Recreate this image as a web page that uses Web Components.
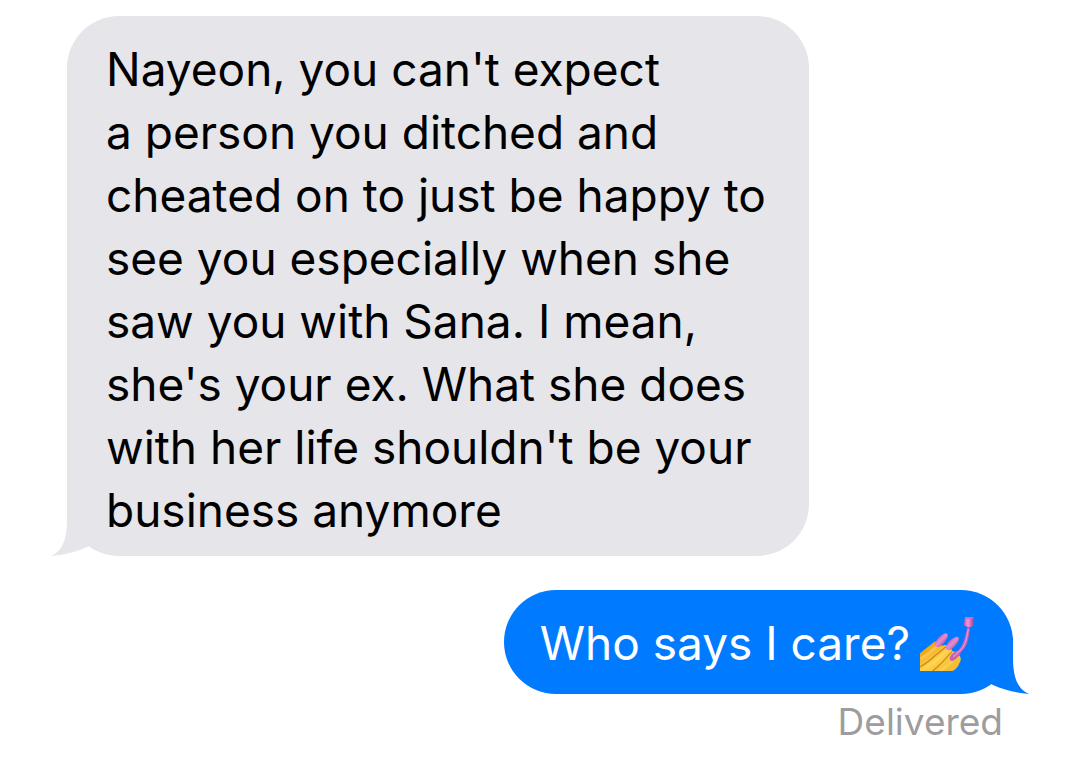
<!DOCTYPE html>
<html lang="en">
<head>
<meta charset="utf-8">
<meta name="viewport" content="width=device-width, initial-scale=1">
<title>Messages</title>
<style>
body { margin: 0; background: #fff; font-family: Inter, "Liberation Sans", sans-serif; }
</style>
</head>
<body>
<message-thread>
  <message-bubble side="received">Nayeon, you can't expect<br>a person you ditched and<br>cheated on to just be happy to<br>see you especially when she<br>saw you with Sana. I mean,<br>she's your ex. What she does<br>with her life shouldn't be your<br>business anymore</message-bubble>
  <message-bubble side="sent">Who says I care? <nail-emoji></nail-emoji></message-bubble>
  <delivery-status>Delivered</delivery-status>
</message-thread>
<script>
const attach = (host, markup) => {
  host.attachShadow({ mode: "open" }).innerHTML = markup;
};

customElements.define("message-thread", class extends HTMLElement {
  constructor() {
    super();
    attach(this, `
      <style>
        :host { display: block; }
        main { display: flex; flex-direction: column; padding: 16px 67px; }
      </style>
      <main><slot></slot></main>`);
  }
});

customElements.define("message-bubble", class extends HTMLElement {
  constructor() {
    super();
    attach(this, `
      <style>
        :host {
          display: block; position: relative; box-sizing: border-box;
          padding: 22px 39px 14px; border-radius: 52px;
          font-size: 46px; line-height: 63px;
        }
        :host([side="received"]) {
          align-self: flex-start; width: 100%; max-width: 742px;
          background: #e5e5ea; color: #000;
        }
        :host([side="sent"]) {
          align-self: flex-end; margin-top: 34px; padding: 22px 39px 19px 36px;
          background: #007aff; color: #fff;
        }
        .tail { position: absolute; bottom: 0; width: 48px; height: 56px; fill: #e5e5ea; left: -16px; }
        :host([side="sent"]) .tail { left: auto; right: -16px; fill: #007aff; transform: scaleX(-1); }
        p { position: relative; margin: 0; }
        :host([side="sent"]) p { display: flex; align-items: center; gap: 10px; }
      </style>
      <svg class="tail" viewBox="0 0 48 56" aria-hidden="true">
        <path d="M16 0V20C16 38 12 51 0 56C12 55 25 52 36 47L48 40V0Z"/>
      </svg>
      <p><slot></slot></p>`);
  }
});

customElements.define("nail-emoji", class extends HTMLElement {
  constructor() {
    super();
    attach(this, `
      <style>
        :host { display: block; flex: none; width: 54px; height: 54px; }
        svg { display: block; width: 100%; height: 100%; }
      </style>
      <svg viewBox="12 12 162 162" role="img" aria-label="Nail polish">
        <defs>
          <linearGradient id="skin" x1="0" y1="0" x2="1" y2="1">
            <stop offset="0.25" stop-color="#f0a91c"/><stop offset="0.5" stop-color="#ffd04a"/><stop offset="0.8" stop-color="#f7bd35"/>
          </linearGradient>
          <linearGradient id="nail" x1="0" y1="0" x2="1" y2="1">
            <stop offset="0.2" stop-color="#c64da8"/><stop offset="0.5" stop-color="#e390d3"/><stop offset="0.85" stop-color="#a93a8d"/>
          </linearGradient>
          <linearGradient id="cap" x1="0" y1="0" x2="1" y2="0">
            <stop offset="0" stop-color="#cf59b0"/><stop offset="0.4" stop-color="#f196d9"/><stop offset="1" stop-color="#a83a8b"/>
          </linearGradient>
        </defs>
        <path d="M12 121L55 86Q72 80 77 98L88 96Q105 96 108 114Q124 117 133 132Q137 140 130 151Q125 166 110 174H12Z" fill="url(#skin)"/>
        <path d="M12 162Q40 145 56 129L90 101M50 174Q70 158 84 142L108 116" fill="none" stroke="#d08a1c" stroke-width="4"/>
        <path d="M13 138Q38 124 62 100M30 164Q62 146 94 112M72 174Q94 160 108 144" fill="none" stroke="#ffdc62" stroke-width="9" opacity=".5"/>
        <path d="M56 94C60 81 76 63 88 61Q97 60 95 72C88 87 77 101 64 102Q54 102 56 94Z" fill="url(#nail)"/>
        <path d="M89 103C94 88 109 74 121 71Q131 71 128 82C121 98 109 109 98 112Q88 112 89 103Z" fill="url(#nail)"/>
        <path d="M154 43H162C158 78 155 99 137 115C131 128 119 143 108 144Q98 142 102 132C107 121 117 116 127 112C142 98 147 72 154 43Z" fill="#c860b4"/>
        <path d="M157 48C152 75 149 97 134 111L112 131" fill="none" stroke="#e78fd8" stroke-width="4"/>
        <path d="M147 13Q159 9 174 14L173 34Q171 43 159 42Q145 41 144 34Z" fill="url(#cap)"/>
        <ellipse cx="160" cy="15" rx="13" ry="3" fill="#d06db8"/>
      </svg>`);
  }
});

customElements.define("delivery-status", class extends HTMLElement {
  constructor() {
    super();
    attach(this, `
      <style>
        :host {
          display: block; align-self: flex-end; margin: 4px 10px 0 0;
          color: #9d9d9f; font-size: 37px; line-height: 48px;
        }
      </style>
      <slot></slot>`);
  }
});
</script>
</body>
</html>
